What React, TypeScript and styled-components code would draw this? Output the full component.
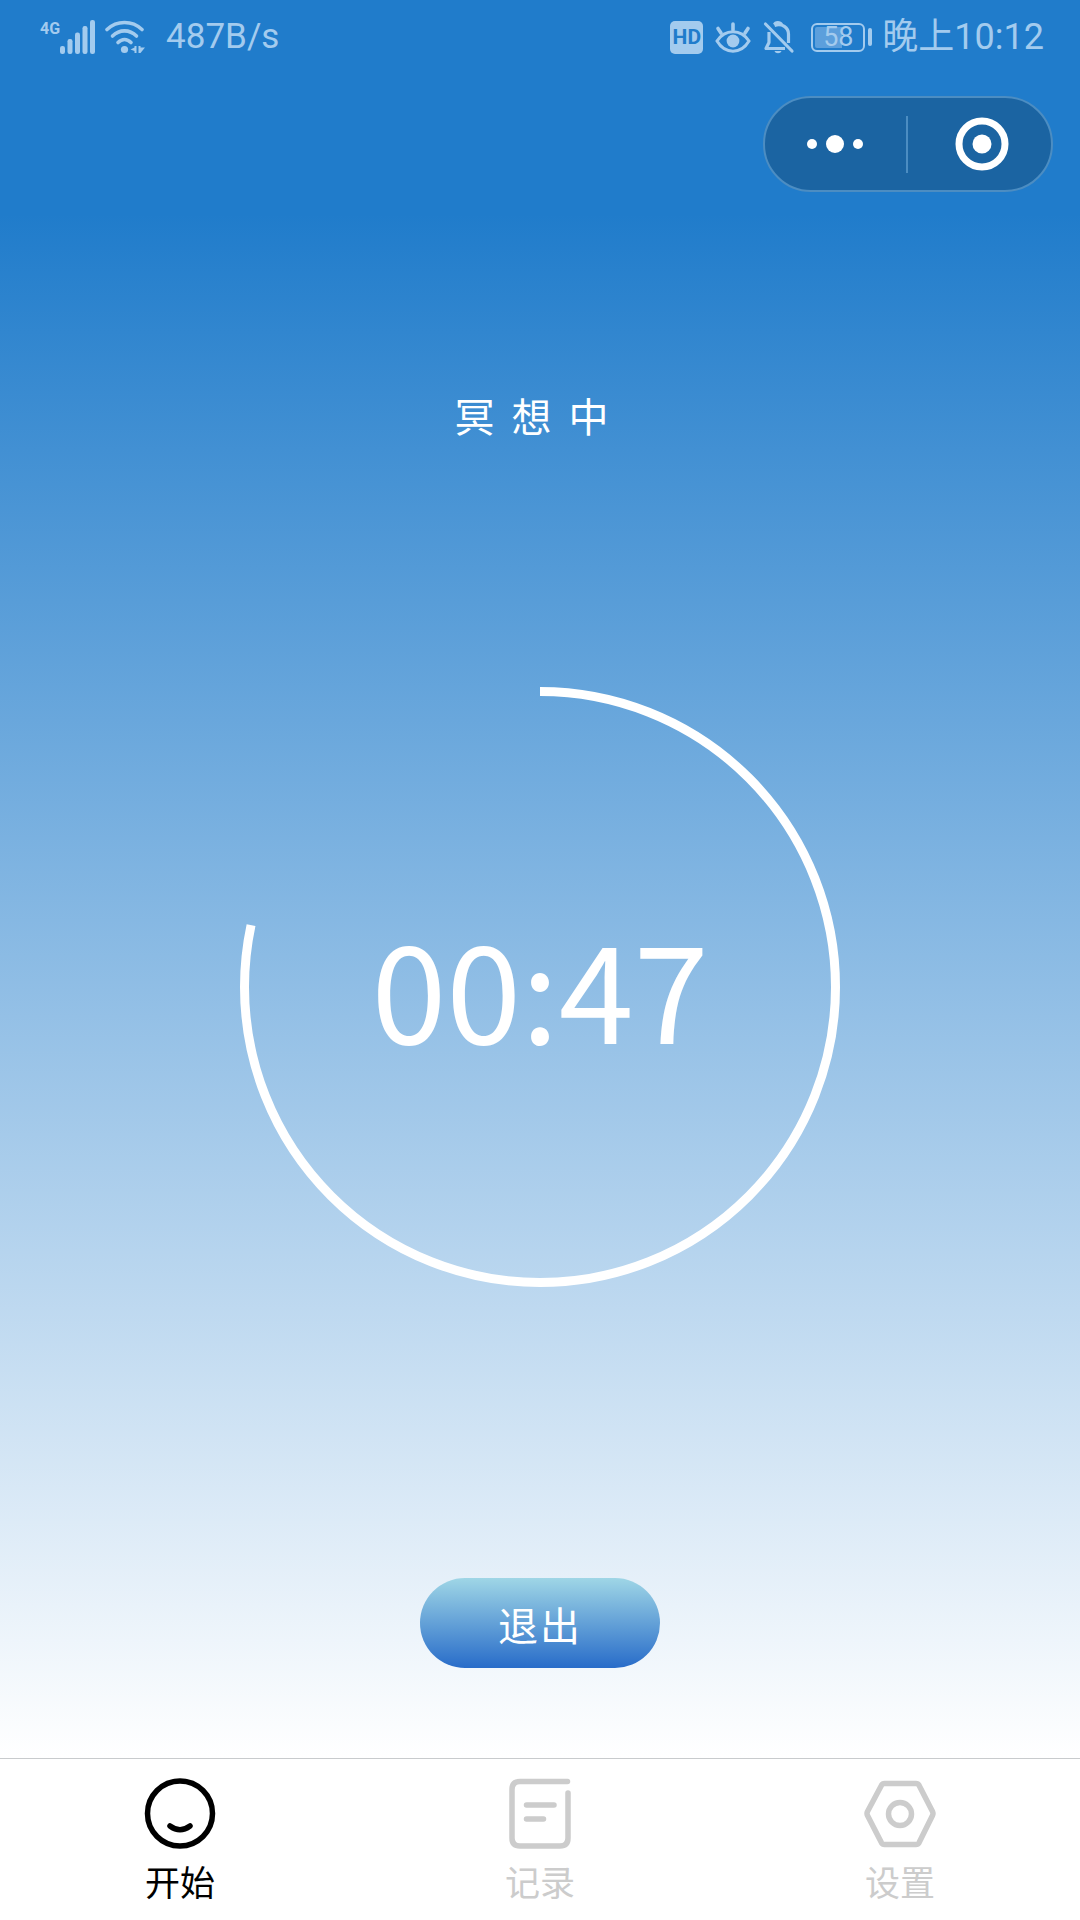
import React from "react";
import styled, { createGlobalStyle } from "styled-components";

const SANS = '"Noto Sans CJK SC", "Noto Sans", sans-serif';
const STATUS = 'Roboto, "Noto Sans CJK SC", sans-serif';
const STATUS_INK = "#a3cbee";
const SKY = "#207ccb";

const GlobalStyle = createGlobalStyle`
  *, *::before, *::after { box-sizing: border-box; }
  body { margin: 0; background: #fff; }
  button { font: inherit; border: 0; padding: 0; background: none; cursor: pointer; }
  svg { display: block; flex: none; }
`;

const Page = styled.div`
  min-height: 100vh;
  display: flex;
  flex-direction: column;
  font-family: ${SANS};
  color: #fff;
`;

const Screen = styled.div`
  flex: 1;
  display: flex;
  flex-direction: column;
  background: linear-gradient(to bottom, ${SKY} 214px, #fff 100%);
`;

const StatusBar = styled.div`
  height: 74px;
  padding: 0 36px 0 40px;
  display: flex;
  align-items: center;
  justify-content: space-between;
  font-family: ${STATUS};
  font-size: 36px;
  line-height: 42px;
  color: ${STATUS_INK};
`;

const StatusGroup = styled.div<{ $gap: number }>`
  display: flex;
  align-items: center;
  gap: ${(p) => p.$gap}px;
`;

const NetworkType = styled.span`
  align-self: flex-start;
  font-size: 16px;
  line-height: 18px;
  font-weight: 700;
`;

const Speed = styled.span`
  padding-left: 12px;
  font-size: 35px;
`;

const HdBadge = styled.span`
  width: 33px;
  height: 33px;
  border-radius: 5px;
  display: flex;
  align-items: center;
  justify-content: center;
  background: ${STATUS_INK};
  color: ${SKY};
  font-size: 21px;
  font-weight: 700;
  line-height: 24px;
`;

const Battery = styled.div`
  display: flex;
  align-items: center;
  gap: 3px;
  padding-left: 4px;
  &::after {
    content: "";
    width: 4px;
    height: 18px;
    border-radius: 2px;
    background: ${STATUS_INK};
  }
`;

const BatteryCell = styled.div<{ $level: number }>`
  width: 54px;
  height: 29px;
  padding: 2px;
  border: 2px solid ${STATUS_INK};
  border-radius: 6px;
  display: flex;
  align-items: center;
  justify-content: center;
  font-size: 27px;
  line-height: 26px;
  background: linear-gradient(
      to right,
      #5c9fdc ${(p) => p.$level}%,
      transparent ${(p) => p.$level}%
    )
    content-box;
`;

const Header = styled.header`
  display: flex;
  justify-content: flex-end;
  padding: 22px 27px 0;
`;

const Capsule = styled.div`
  width: 290px;
  height: 96px;
  display: flex;
  align-items: center;
  border: 2px solid #4c8dc2;
  border-radius: 48px;
  background: #1b64a2;
`;

const CapsuleButton = styled.button`
  flex: 1;
  height: 100%;
  display: flex;
  align-items: center;
  justify-content: center;
  &:first-child {
    padding-right: 2px;
  }
  &:last-child {
    padding-left: 4px;
  }
`;

const CapsuleDivider = styled.span`
  width: 2px;
  height: 57px;
  background: #4c8dc2;
`;

const Session = styled.main`
  display: flex;
  flex-direction: column;
  align-items: center;
  padding: 193px 0 90px;
`;

const Title = styled.h1`
  margin: 0;
  font-size: 40px;
  line-height: 60px;
  font-weight: 400;
  letter-spacing: 17px;
`;

const Dial = styled.div`
  margin-top: 242px;
  display: grid;
  place-items: center;
  & > * {
    grid-area: 1 / 1;
  }
`;

const Clock = styled.time`
  padding-bottom: 4px;
  font-size: 135px;
  line-height: 160px;
`;

const ExitButton = styled.button`
  && {
    width: 240px;
    height: 90px;
    margin-top: 291px;
    padding-top: 2px;
    border-radius: 45px;
    background: linear-gradient(to bottom, #9fd6e6, #286cc9);
    color: #fff;
    font-size: 40px;
    line-height: 60px;
    letter-spacing: 2px;
  }
`;

const TabBar = styled.nav`
  height: 162px;
  display: flex;
  border-top: 1px solid #c8cbcd;
  background: #fff;
`;

const Tab = styled.a<{ $active?: boolean }>`
  flex: 1;
  display: flex;
  flex-direction: column;
  align-items: center;
  padding-top: 19px;
  gap: 5px;
  font-size: 35px;
  line-height: 52px;
  text-decoration: none;
  color: ${(p) => (p.$active ? "#000" : "#ccc")};
`;

const SignalIcon = () => (
  <svg width="36" height="34" viewBox="0 0 36 34" fill="currentColor" aria-hidden="true">
    <rect x="0" y="26" width="5" height="8" rx="2.2" />
    <rect x="7.5" y="19" width="5" height="15" rx="2.2" />
    <rect x="15" y="12.500" width="5" height="21.500" rx="2.2" />
    <rect x="22.500" y="6" width="5" height="28" rx="2.2" />
    <rect x="30" y="0" width="5" height="34" rx="2.2" />
  </svg>
);

const WifiIcon = () => (
  <svg width="40" height="34" viewBox="0 0 40 34" fill="none" aria-hidden="true">
    <g stroke="currentColor" strokeWidth="3.6" strokeLinecap="round">
      <path d="M2 9.500C12 .2 27 .2 37 9.500" />
      <path d="M7.500 16C14.500 9.200 24.500 9.200 31.500 16" />
      <path d="M13 22.500C17 18.400 22 18.400 26 22.500" />
    </g>
    <circle cx="19.500" cy="29.500" r="3.6" fill="currentColor" />
    <path d="M31.500 26v7h-2v-2l-4-1.500 4-2V26zM33.500 26h2v1.500h4.500l-4.500 5.500h-2z" fill="currentColor" />
  </svg>
);

const EyeIcon = () => (
  <svg width="36" height="34" viewBox="0 0 36 34" fill="none" aria-hidden="true">
    <g stroke="currentColor" strokeWidth="3.6" strokeLinecap="round">
      <path d="M18 10V4M6 13L3 8.500M30 13l3-4.500" />
      <path d="M2 21C10 8.500 26 8.500 34 21C26 34.500 10 34.500 2 21Z" strokeWidth="3" />
    </g>
    <circle cx="18" cy="21" r="6.4" fill="currentColor" />
  </svg>
);

const MutedBellIcon = () => (
  <svg width="32" height="34" viewBox="0 0 32 34" fill="none" stroke="currentColor" strokeWidth="3.2" aria-hidden="true">
    <path d="M2.500 4L29 31" strokeLinecap="round" />
    <path d="M6 12v10.500L3 28.500H22" strokeLinejoin="round" />
    <path d="M11.500 5.500C19 2.500 25.500 8 25.500 14v9" />
    <path d="M11.500 4.500C12.500 1.800 17 1.800 18.500 4.500" />
    <path d="M11.500 31h7c-1 3-6 3-7 0z" fill="currentColor" stroke="none" />
  </svg>
);

const MoreIcon = () => (
  <svg width="56" height="18" viewBox="0 0 56 18" fill="#fff" aria-hidden="true">
    <circle cx="5" cy="9" r="5" />
    <circle cx="28" cy="9" r="9" />
    <circle cx="51" cy="9" r="5" />
  </svg>
);

const TargetIcon = () => (
  <svg width="54" height="54" viewBox="0 0 54 54" aria-hidden="true">
    <circle cx="27" cy="27" r="23" fill="none" stroke="#fff" strokeWidth="7" />
    <circle cx="27" cy="27" r="9.500" fill="#fff" />
  </svg>
);

const SmileIcon = () => (
  <svg width="72" height="72" viewBox="0 0 72 72" fill="none" stroke="currentColor" strokeWidth="5.5" strokeLinecap="round" aria-hidden="true">
    <circle cx="36" cy="35.500" r="32.500" />
    <path d="M26 48Q36 55.500 46 48" />
  </svg>
);

const NoteIcon = () => (
  <svg width="72" height="72" viewBox="0 0 72 72" fill="none" stroke="currentColor" strokeWidth="5.5" strokeLinecap="round" aria-hidden="true">
    <path d="M63.500 3.500H16Q8 3.500 8 11.500V60Q8 68 16 68H56Q64 68 64 60V15" />
    <path d="M22.500 27H50M22.500 41H39.500" />
  </svg>
);

const NutIcon = () => (
  <svg width="72" height="72" viewBox="0 0 72 72" fill="none" stroke="currentColor" strokeWidth="5.5" strokeLinejoin="round" aria-hidden="true">
    <path d="M20.500 5.500H52Q54 5.500 55 7.200L68.500 33.500Q69.500 35.500 68.500 37.500L55 64.800Q54 66.500 52 66.500H20.500Q18.500 66.500 17.500 64.800L3.500 37.500Q2.500 35.500 3.500 33.500L17.500 7.200Q18.500 5.500 20.500 5.500Z" />
    <circle cx="36" cy="36" r="11.500" />
  </svg>
);

const RADIUS = 295.5;
const LENGTH = 2 * Math.PI * RADIUS;

const ProgressRing = ({ value }: { value: number }) => (
  <svg width="600" height="600" viewBox="0 0 600 600" fill="none" aria-hidden="true">
    <circle
      cx="300"
      cy="300"
      r={RADIUS}
      stroke="#fff"
      strokeWidth="9"
      strokeDasharray={`${LENGTH * value} ${LENGTH}`}
      transform="rotate(-90 300 300)"
    />
  </svg>
);

export default function App() {
  const seconds = 47;
  return (
    <Page>
      <GlobalStyle />
      <Screen>
        <StatusBar>
          <StatusGroup $gap={9}>
            <StatusGroup $gap={0}>
              <NetworkType>4G</NetworkType>
              <SignalIcon />
            </StatusGroup>
            <WifiIcon />
            <Speed>487B/s</Speed>
          </StatusGroup>
          <StatusGroup $gap={12}>
            <HdBadge>HD</HdBadge>
            <EyeIcon />
            <MutedBellIcon />
            <StatusGroup $gap={10}>
              <Battery>
                <BatteryCell $level={58}>58</BatteryCell>
              </Battery>
              <span>晚上10:12</span>
            </StatusGroup>
          </StatusGroup>
        </StatusBar>
        <Header>
          <Capsule>
            <CapsuleButton type="button" aria-label="更多">
              <MoreIcon />
            </CapsuleButton>
            <CapsuleDivider />
            <CapsuleButton type="button" aria-label="关闭">
              <TargetIcon />
            </CapsuleButton>
          </Capsule>
        </Header>
        <Session>
          <Title>冥想中</Title>
          <Dial>
            <ProgressRing value={seconds / 60} />
            <Clock>00:{seconds}</Clock>
          </Dial>
          <ExitButton type="button">退出</ExitButton>
        </Session>
      </Screen>
      <TabBar>
        <Tab href="#start" $active aria-current="page">
          <SmileIcon />
          开始
        </Tab>
        <Tab href="#records">
          <NoteIcon />
          记录
        </Tab>
        <Tab href="#settings">
          <NutIcon />
          设置
        </Tab>
      </TabBar>
    </Page>
  );
}
